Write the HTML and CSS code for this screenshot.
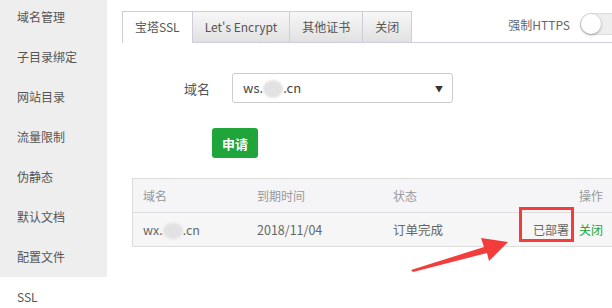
FILE: index.html
```html
<!DOCTYPE html>
<html lang="zh-CN">
<head>
    <meta charset="UTF-8">
    <title>SSL</title>
    <link rel="stylesheet" href="styles.css">
</head>
<body>
    <div class="page">
        <aside class="sidebar">
            <div class="side-item">域名管理</div>
            <div class="side-item">子目录绑定</div>
            <div class="side-item">网站目录</div>
            <div class="side-item">流量限制</div>
            <div class="side-item">伪静态</div>
            <div class="side-item">默认文档</div>
            <div class="side-item">配置文件</div>
            <div class="side-item active">SSL</div>
        </aside>

        <main class="content">
            <div class="tab-bar">
                <div class="tab active">宝塔SSL</div>
                <div class="tab">Let's Encrypt</div>
                <div class="tab">其他证书</div>
                <div class="tab">关闭</div>
                <div class="force-https">
                    <span>强制HTTPS</span>
                    <span class="switch"><span class="knob"></span></span>
                </div>
            </div>

            <div class="form-row">
                <label class="form-label">域名</label>
                <div class="select">
                    <span>ws.<span class="blur"></span>.cn</span>
                    <span class="caret">&#9660;</span>
                </div>
            </div>
            <div class="form-row">
                <button class="btn-apply">申请</button>
            </div>

            <table class="cert-table">
                <thead>
                    <tr>
                        <th class="col-name">域名</th>
                        <th class="col-date">到期时间</th>
                        <th>状态</th>
                        <th class="col-op">操作</th>
                    </tr>
                </thead>
                <tbody>
                    <tr>
                        <td>wx.<span class="blur small"></span>.cn</td>
                        <td>2018/11/04</td>
                        <td>订单完成</td>
                        <td class="col-op"><span class="deployed">已部署</span><a class="close-link">关闭</a></td>
                    </tr>
                </tbody>
            </table>
        </main>
    </div>

    <!-- annotation drawn over the screenshot -->
    <div class="mark-box"></div>
    <svg class="mark-arrow" width="612" height="308" viewBox="0 0 612 308">
        <polygon points="411,270 484,247 481,238 508,242 489,261 487,253 413,272" fill="#f33d3d"/>
    </svg>
</body>
</html>
```

FILE: styles.css
```css
body {
    margin: 0;
    font-family: "Noto Sans CJK SC", "Noto Sans", sans-serif;
    font-size: 12px;
    color: #555;
    background: #fff;
    overflow: hidden;
    width: 612px;
    height: 308px;
}
.page {
    display: flex;
    width: 626px;
}
.sidebar {
    width: 107px;
    flex-shrink: 0;
    margin-top: -3px;
}
.side-item {
    height: 40px;
    line-height: 40px;
    padding-left: 17px;
    background: #eee;
    color: #555;
}
.side-item.active {
    background: #fff;
}
.content {
    flex: 1;
    padding: 11px 0 0 15px;
}
.tab-bar {
    display: flex;
    align-items: flex-end;
    height: 31px;
    border-bottom: 1px solid #cfcddc;
}
.tab {
    height: 30px;
    line-height: 30px;
    padding: 0 12px;
    border: 1px solid #cfcddc;
    border-bottom: none;
    border-left: none;
    background: linear-gradient(#f7f7f7, #e1e1e1);
    color: #555;
}
.tab:first-child {
    border-left: 1px solid #cfcddc;
}
.tab.active {
    background: #fff;
    height: 31px;
    margin-bottom: -1px;
}
.force-https {
    margin-left: auto;
    align-self: flex-start;
    display: flex;
    align-items: center;
    margin-top: 2px;
    color: #666;
}
.switch {
    display: inline-block;
    width: 44px;
    height: 20px;
    margin-left: 10px;
    border: 1px solid #ddd;
    border-radius: 11px;
    background: #eee;
    position: relative;
}
.knob {
    position: absolute;
    left: 0;
    top: 0;
    width: 20px;
    height: 20px;
    border-radius: 50%;
    background: #fff;
    box-shadow: 0 1px 3px rgba(0, 0, 0, 0.35);
}
.form-row {
    display: flex;
    align-items: center;
    margin-top: 30px;
}
.form-label {
    width: 88px;
    text-align: right;
    padding-right: 22px;
    font-size: 13px;
    color: #555;
}
.select {
    width: 200px;
    height: 28px;
    border: 1px solid #ccc;
    border-radius: 3px;
    display: flex;
    align-items: center;
    justify-content: space-between;
    padding: 0 9px 0 10px;
    font-size: 13px;
    color: #444;
}
.caret {
    font-size: 8px;
    color: #333;
}
.blur {
    display: inline-block;
    width: 20px;
    height: 18px;
    border-radius: 50%;
    background: #e2e2e2;
    vertical-align: middle;
    filter: blur(1px);
}
.blur.small {
    height: 16px;
    width: 20px;
}
.btn-apply {
    margin-left: 90px;
    margin-top: -5px;
    width: 46px;
    height: 30px;
    border: none;
    border-radius: 3px;
    background: #20a53a;
    color: #fff;
    font-family: inherit;
    font-size: 13px;
    font-weight: bold;
}
.cert-table {
    margin: 20px 0 0 10px;
    width: 482px;
    border-collapse: collapse;
    border: 1px solid #ddd;
}
.cert-table th,
.cert-table td {
    height: 33px;
    padding: 0 10px;
    text-align: left;
    font-weight: normal;
}
.cert-table th {
    background: #f5f5f8;
    color: #999;
    border-bottom: 1px solid #ddd;
}
.cert-table td {
    background: #f6f6f6;
    color: #666;
    font-size: 12.5px;
}
.cert-table .col-name {
    width: 94px;
}
.cert-table .col-date {
    width: 116px;
}
.cert-table .col-op {
    text-align: right;
}
.deployed {
    color: #666;
    font-size: 12px;
}
.close-link {
    color: #20a53a;
    margin-left: 10px;
    font-size: 12px;
}
.mark-box {
    position: absolute;
    left: 519px;
    top: 207px;
    width: 49px;
    height: 29px;
    border: 3px solid #f33d3d;
}
.mark-arrow {
    position: absolute;
    left: 0;
    top: 0;
}
```
